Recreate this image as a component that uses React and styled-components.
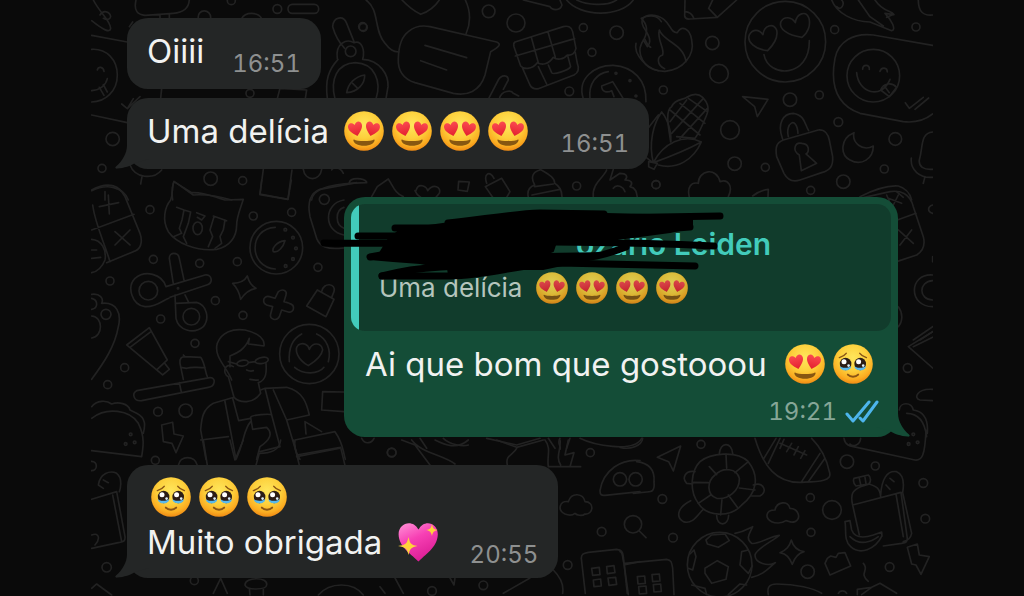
import React from "react";
import styled, { createGlobalStyle, ThemeProvider } from "styled-components";

const theme = {
    fonts: {
        sansSerif: '"Inter", "Liberation Sans", sans-serif',
    },
    colors: {
        page: "#0a0a0a",
        doodle: "#222222",
        incoming: "#242626",
        outgoing: "#144d37",
        quote: "#113c2c",
        accent: "#42cbbb",
        text: "#f1f2f1",
        read: "#4db5ec",
    },
};

const GlobalStyle = createGlobalStyle`
    * {
        box-sizing: border-box;
    }

    body {
        margin: 0;
        background: ${theme.colors.page};
        font-family: ${theme.fonts.sansSerif};
    }
`;

const Chat = styled.main`
    position: relative;
    display: flex;
    flex-direction: column;
    align-items: flex-start;
    max-width: 842px;
    min-height: 100vh;
    margin: 0 auto;
    padding: 18px 35px 18px 36px;
    overflow: hidden;
`;

const WallpaperArt = styled.svg`
    position: absolute;
    top: 0;
    left: 0;
    width: 100%;
    height: 100%;
    fill: none;
    stroke: ${(props) => props.theme.colors.doodle};
    stroke-width: 5;
    stroke-linecap: round;
    stroke-linejoin: round;
`;

const Bubble = styled.article`
    position: relative;
    display: flex;
    align-items: flex-end;
    gap: 28px;
    margin-top: ${(props) => (props.$first ? "0" : props.$grouped ? "9px" : "28px")};
    padding: ${(props) => (props.$lines > 1 ? "10px 20px 8px 20px" : "11px 20px 10px 20px")};
    border-radius: 21px;
    background: ${(props) => props.theme.colors.incoming};
`;

const OutgoingBubble = styled(Bubble)`
    flex-direction: column;
    align-items: stretch;
    align-self: flex-end;
    gap: 0;
    min-width: 554px;
    padding: 7px 7px 10px;
    background: ${(props) => props.theme.colors.outgoing};
`;

const TailShape = styled.svg`
    position: absolute;
    bottom: 0;
    width: 34px;
    height: 30px;
    ${(props) =>
        props.$side === "right"
            ? "right: -12px; transform: scaleX(-1);"
            : "left: -12px;"}
    fill: ${(props) =>
        props.$side === "right"
            ? props.theme.colors.outgoing
            : props.theme.colors.incoming};
`;

const Message = styled.p`
    margin: 0;
    padding-bottom: 5px;
    color: ${(props) => props.theme.colors.text};
    font-size: 33px;
    line-height: 45px;
    white-space: nowrap;
`;

const OutgoingMessage = styled(Message)`
    display: flex;
    justify-content: space-between;
    align-items: center;
    padding: 11px 14px 10px;
`;

const Time = styled.time`
    color: ${(props) => (props.$outgoing ? "#86a697" : "#8e9090")};
    font-size: 24px;
    font-variant-numeric: tabular-nums;
    line-height: 30px;
`;

const Meta = styled.div`
    display: flex;
    align-items: center;
    justify-content: flex-end;
    gap: 8px;
    padding-right: 12px;
`;

const Quote = styled.blockquote`
    position: relative;
    margin: 0;
    padding: 20px 20px 23px 28px;
    border-radius: 14px;
    background: linear-gradient(
        to right,
        ${(props) => props.theme.colors.accent} 8px,
        ${(props) => props.theme.colors.quote} 8px
    );
`;

const Author = styled.cite`
    display: flex;
    margin-bottom: 4px;
    color: ${(props) => props.theme.colors.accent};
    font-size: 30px;
    font-style: normal;
    font-weight: 600;
    line-height: 40px;
    white-space: nowrap;
`;

const HiddenName = styled.span`
    width: 197px;
`;

const QuotedText = styled.p`
    margin: 0;
    color: #b5c5bd;
    font-size: 26px;
    line-height: 40px;
    white-space: nowrap;
`;

const ScribbleArt = styled.svg`
    position: absolute;
    top: -14px;
    left: -41px;
    width: 420px;
    height: 100px;
    fill: #000;
    stroke: #000;
    stroke-linecap: round;
    stroke-linejoin: round;
`;

const EmojiRun = styled.span`
    margin-left: 2px;
`;

const EmojiArt = styled.svg`
    width: ${(props) => (props.$small ? "32px" : "40px")};
    height: ${(props) => (props.$small ? "32px" : "40px")};
    margin: 0 4px;
    vertical-align: ${(props) => (props.$small ? "-7px" : "-8px")};
    opacity: ${(props) => (props.$small ? 0.86 : 1)};
`;

const Ticks = styled.svg`
    width: 34px;
    height: 24px;
    fill: none;
    stroke: ${(props) => props.theme.colors.read};
    stroke-width: 3;
    stroke-linecap: round;
    stroke-linejoin: round;
`;

const Defs = styled.svg`
    position: absolute;
`;

function EmojiPaints() {
    return (
        <Defs width="0" height="0" aria-hidden="true">
            <defs>
                <radialGradient id="face" cx="50%" cy="34%" r="68%">
                    <stop offset="0" stopColor="#ffe65c" />
                    <stop offset="0.5" stopColor="#fdd03c" />
                    <stop offset="0.8" stopColor="#fbae22" />
                    <stop offset="1" stopColor="#ee8512" />
                </radialGradient>
                <linearGradient id="love" x1="0" y1="0" x2="0" y2="1">
                    <stop offset="0" stopColor="#fb4a50" />
                    <stop offset="1" stopColor="#e3202f" />
                </linearGradient>
                <linearGradient id="pink" x1="0.2" y1="0" x2="0.7" y2="1">
                    <stop offset="0" stopColor="#ff86d2" />
                    <stop offset="0.4" stopColor="#f740b4" />
                    <stop offset="1" stopColor="#d81991" />
                </linearGradient>
            </defs>
        </Defs>
    );
}

const eyeHeart =
    "M0 7.6C-3 5.2 -8 1.6 -8 -2.4C-8 -6.8 -2.4 -8 0 -3.6C2.4 -8 8 -6.8 8 -2.4C8 1.6 3 5.2 0 7.6Z";

function HeartEyes({ small }) {
    return (
        <EmojiArt viewBox="0 0 40 40" $small={small} role="img" aria-label="😍">
            <circle cx="20" cy="20" r="19.8" fill="url(#face)" />
            <path
                d="M10 28.4C13 30.4 27 30.4 30 28.4C31.4 28.2 30.4 31.2 27.8 33C24 35.4 16 35.4 12.2 33C9.6 31.2 8.6 28.2 10 28.4Z"
                fill="#875711"
            />
            <g fill="url(#love)">
                <path d={eyeHeart} transform="translate(11.6 17.6) rotate(-14) scale(.88 1)" />
                <path d={eyeHeart} transform="translate(28.4 17.6) rotate(14) scale(.88 1)" />
            </g>
        </EmojiArt>
    );
}

function HappyTears() {
    return (
        <EmojiArt viewBox="0 0 40 40" role="img" aria-label="🥹">
            <circle cx="20" cy="20" r="19.8" fill="url(#face)" />
            {[12.6, 27.2].map((x) => (
                <g key={x}>
                    <ellipse cx={x} cy="20" rx="5.8" ry="6.2" fill="#2b1d16" />
                    <path
                        d={`M${x - 5.8} 22C${x - 5} 24.4 ${x + 4} 24.4 ${x + 5.6} 22C${x + 5.6} 27.8 ${x - 5.4} 28 ${x - 5.8} 22Z`}
                        fill="#58b9ed"
                    />
                    <circle cx={x - 1.6} cy="17.8" r="2.5" fill="#fff" />
                    <circle cx={x + 3} cy="21.6" r="1.3" fill="#dff2ff" />
                </g>
            ))}
            <g fill="none" stroke="#8a5515" strokeWidth="1.5" strokeLinecap="round">
                <path d="M6.4 13.6C9 12.8 11.6 11.6 13.2 9.4" />
                <path d="M33.4 13.6C31 12.8 28.4 11.6 26.8 9.4" />
                <path d="M14.8 30.6C17.4 33.4 22.6 33.4 25.2 30.6" strokeWidth="1.9" />
            </g>
        </EmojiArt>
    );
}

function SparklingHeart() {
    return (
        <EmojiArt viewBox="0 0 40 40" role="img" aria-label="💖">
            <path
                d="M20.5 39.6C15 33 1 26 .6 12.4C.4 .6 15-3.4 20.5 7.6C26-3.4 40 .6 39.8 12.4C39.4 26 26 33 20.5 39.6Z"
                fill="url(#pink)"
            />
            <g fill="#ffd23b">
                <path d="M10.5 15C12 22 13.4 23 19.5 24C13.4 25.2 12 26.4 10.5 33C9 26.4 7.4 25.2 0 24C7.4 23 9 22 10.5 15Z" />
                <path d="M34 2C34.8 6.4 36 7.4 40 8C36 8.8 34.8 9.8 34 14C33 9.8 32 8.8 28 8C32 7.4 33 6.4 34 2Z" />
            </g>
        </EmojiArt>
    );
}

function Tail({ side }) {
    return (
        <TailShape viewBox="0 0 34 30" $side={side} aria-hidden="true">
            <path d="M12 0V6C12 15 7 22 1 27.6C-.4 29 .4 29.8 2.4 29.6C9 29 16 27 20 24L34 20V0Z" />
        </TailShape>
    );
}

function Scribble() {
    return (
        <ScribbleArt viewBox="310 190 420 100" aria-hidden="true">
            <path
                d="M380 253L388 240L400 230L450 223L540 214L606 214L692 216L692 227L670 232L610 240L545 241L555 245L553 251L545 254L610 253L590 259L543 269L510 269L462 276L449 275L448 268L420 263L393 261L370 259Z"
                strokeWidth="2"
            />
            <g fill="none" strokeWidth="7">
                <path d="M324 243C440 245 560 238 714 246" />
                <path d="M358 236H400M395 228H440" />
                <path d="M448 223C480 220 510 214 540 213L604 214" />
                <path d="M540 219L720 216" />
                <path d="M690 227C650 230 600 234 540 240" />
                <path d="M370 257C400 250 420 255 440 256" />
                <path d="M382 276C420 266 440 268 455 266" />
                <path d="M382 276H450C490 275 520 264 560 263L695 266" />
                <path d="M560 259C590 259 605 255 626 247" />
            </g>
        </ScribbleArt>
    );
}

// Each group of doodles is drawn at three times its size on the wallpaper.
function Patch({ x, y, children }) {
    return <g transform={`translate(${x} ${y}) scale(.3333)`}>{children}</g>;
}

function Dots({ at }) {
    return at.map(([x, y, r = 12]) => <circle key={`${x}-${y}`} cx={x} cy={y} r={r} />);
}

function Wallpaper() {
    return (
        <WallpaperArt viewBox="91 0 842 596" preserveAspectRatio="xMidYMin slice" aria-hidden="true">
            <Patch x={90} y={0}>
                <path d="M10 0C30 40 60 60 62 85C60 100 40 90 5 62M30 45C40 28 60 35 62 50C60 60 50 60 40 55" />
                <path d="M138 0C130 35 145 44 165 46L250 40C280 38 296 25 298 0M210 44V56M238 42V56" />
                <path d="M5 106L112 126M5 148C50 145 82 180 82 225C82 275 45 305 5 306M22 210C25 198 40 200 42 214M5 272C30 270 48 255 52 236M28 262L42 286M40 254L52 276" />
                <path d="M325 56C320 25 365 25 362 56M455 56C465 35 505 35 515 56M95 312L112 326L150 290M112 326L130 296M5 345L112 368" />
                <path d="M120 495C135 535 190 540 215 510M156 530L152 552M5 572C50 550 100 560 115 600M45 575V600M118 80L128 66" />
                <path d="M215 265L212 296M562 296L570 265L650 270L646 296M520 508L510 584L594 598L606 510M640 508C645 545 690 545 695 508M248 600C245 580 248 555 252 544L310 585C350 582 390 590 425 600" />
                <path d="M665 600C670 560 740 550 830 548M778 548C780 532 820 532 830 546M845 590L862 560L895 537C910 560 915 580 940 590" />
                <rect x="594" y="13" width="92" height="27" rx="13" />
                <Dots at={[[68, 417, 20], [36, 505], [562, 27, 13], [424, 2], [480, 280], [362, 536, 20], [458, 542], [820, 82]]} />
            </Patch>
            <Patch x={330} y={0}>
                <path d="M108 0C150 30 130 90 165 130C180 150 190 155 206 156M406 0C425 40 420 75 408 102M216 0C235 20 255 35 272 43C295 35 315 20 328 0" />
                <path d="M235 95C255 78 275 75 300 80L500 126C515 132 508 140 482 155L465 225C450 275 410 288 370 280L255 248C215 235 203 210 205 175C206 140 212 112 235 95ZM285 136L410 173M272 182L350 210" />
                <path d="M8 80C10 50 40 45 50 70L72 125M8 80C15 105 25 125 44 145M22 176C15 130 50 115 72 128C95 120 106 150 98 178C150 180 176 225 174 260L168 296M-8 296C-15 240 -5 210 24 178M50 278C55 250 75 230 104 225C105 250 85 275 50 278ZM68 250L84 266" />
                <circle cx="62" cy="154" r="16" />
                <path d="M15 296C0 240 20 190 76 188C135 190 155 245 138 296" />
                <path d="M555 126L700 80C715 76 725 82 728 95L738 145C735 160 725 168 712 165C700 180 680 180 670 172C655 195 635 195 622 188C605 210 580 208 572 198L552 140C550 133 550 130 555 126ZM604 112L625 188M654 96L676 172M556 168L734 116M578 205L600 255C606 266 614 268 625 266L732 225C745 218 748 205 742 190L736 158M625 200L650 252M655 195L665 218C670 226 718 210 722 200L714 170" />
                <path d="M476 296L505 240C515 222 535 225 535 240L520 268M508 296C515 270 545 270 550 280L566 288M580 0L660 20C665 30 690 35 696 15L690 0M710 0C750 50 870 55 910 0M740 0C770 15 830 20 860 0" />
                <path d="M934 55C955 75 955 100 935 130C920 160 940 205 985 212M934 55C965 40 985 50 994 65M945 118C950 130 955 138 962 142" />
                <path d="M760 296C740 235 795 195 850 196C910 200 950 240 948 305M780 296C775 250 800 220 835 215M815 258L848 245L880 296M815 258C815 275 830 280 845 272L852 290" />
                <path d="M5 510C10 500 30 500 40 520M258 572C265 545 290 560 293 572C310 550 335 560 328 580L318 592M255 572C260 585 265 588 272 592M386 544L418 546L412 574L384 570ZM466 560L515 535L540 575L530 592M466 560L488 592M470 550C460 520 480 510 492 535M595 592C590 570 600 560 614 555C600 530 610 515 630 510L634 490M634 510C660 525 675 535 674 550C690 560 695 570 696 590M614 560L670 552M606 585L690 568" />
                <path d="M790 592C785 550 820 535 830 510M850 508L840 540L870 520C890 520 895 530 885 540C905 540 910 550 900 560C920 565 920 580 922 592M850 565C860 550 880 560 885 575" />
                <Dots at={[[476, 34, 19], [558, 69, 27], [98, 80], [760, 83], [860, 98, 20], [786, 157], [718, 274, 13], [740, 558], [978, 554], [858, 220, 3], [900, 242, 3], [918, 288, 3]]} />
            </Patch>
            <Patch x={640} y={0}>
                <path d="M-12 130C-20 160 20 215 75 214C130 210 165 165 155 120C150 85 125 75 112 98C85 100 95 50 35 45C10 45 0 60 10 80C30 110 35 125 22 140L10 120M58 90C50 120 75 145 68 165C50 170 50 195 74 206M58 90C70 125 130 130 138 185" />
                <path d="M135 0L134 48C136 58 142 58 150 57L232 52L290 0M206 25L232 52M134 35C150 35 158 45 162 56M206 25L218 0" />
                <circle cx="436" cy="125" r="121" />
                <path d="M383 152C345 148 320 125 328 105C338 85 358 88 369 104C372 75 400 68 410 90C415 112 400 135 383 152ZM486 112C440 105 415 85 423 65C432 48 455 50 466 68C470 40 498 30 507 55C512 75 505 98 486 112ZM372 164C385 235 510 235 508 122" />
                <path d="M575 0C590 40 640 65 690 66L755 92C770 90 755 60 735 40L762 44C755 30 730 38 705 0M590 20C605 35 615 10 605 0M655 0L690 50M690 50L730 78M740 52L758 44M835 0C835 35 850 48 878 45" />
                <path d="M878 136L700 105C640 98 595 125 585 175C570 255 590 315 660 340L790 365C830 370 855 360 878 342" />
                <circle cx="700" cy="227" r="79" />
                <path d="M668 208C668 192 690 192 688 208M720 214C724 200 742 202 742 216M650 218C655 280 725 300 750 238M722 270C730 250 755 245 770 262L748 290L722 270M735 260L748 278M796 308L808 325L850 292M825 328L866 294" />
                <path d="M308 290L384 298L352 350L344 320ZM428 418C410 370 430 340 460 340C495 345 495 375 506 392M445 410C435 370 470 345 474 400" />
                <path d="M430 420L535 390C555 388 565 405 568 420L578 470C580 500 570 510 545 518L480 540C455 548 440 535 432 520L410 470C405 440 410 428 430 420Z" />
                <path d="M478 465C455 450 465 425 486 430C510 432 508 455 498 462L530 490L484 512Z" />
                <path d="M642 398C600 415 600 465 630 480C665 500 700 475 700 438C670 455 635 430 642 398ZM878 396C840 400 850 440 838 480C836 500 850 510 878 508M814 474C810 510 840 535 878 532M855 530L850 550" />
                <path d="M40 488C25 430 40 370 65 336C85 360 95 400 92 425M40 488C70 430 130 400 184 426C160 480 110 510 55 495M40 488C90 470 140 450 184 426M15 470L35 485M26 485L52 490L42 508L26 500ZM20 390L55 345" />
                <path d="M92 425C85 380 75 330 95 320C105 295 130 300 140 292C160 280 175 280 188 292C200 305 210 320 200 345C190 370 180 395 165 415L110 410M90 330L180 405M120 310L195 370M145 295L202 335M90 365L140 300M95 400L190 295M120 415L202 325" />
                <path d="M148 592C140 560 155 545 175 550C175 510 230 500 240 545C265 535 280 560 265 590M338 588C355 575 370 570 385 568L384 590M660 590C700 570 740 555 775 558C800 565 810 580 815 600M770 575L790 592" />
                <Dots at={[[217, 129, 20], [237, 221, 28], [70, 270], [270, 390, 28], [284, 491, 20], [376, 502], [48, 554], [450, 299, 20], [538, 285], [584, 89], [828, 81], [595, 366, 13], [766, 417, 19], [733, 507], [610, 545, 20], [512, 571]]} />
            </Patch>
            <Patch x={90} y={180}>
                <path d="M5 30C60 0 90 20 105 50L150 160C160 190 150 210 130 215L50 248M8 75C15 130 40 180 60 245M5 150L132 103M55 45L58 102M28 80L86 68M75 155L120 195M120 150L75 195M5 178C35 180 50 210 45 240C35 265 20 275 5 278M5 210H20M5 235L32 232" />
                <path d="M252 5L305 38C340 35 370 50 405 60L460 58C450 90 440 110 440 135C440 170 420 200 380 208C320 215 260 190 235 155C215 120 225 80 242 60C250 40 245 20 252 5Z" />
                <path d="M260 82L282 90L276 120L268 145L275 160L250 170M282 90L302 96L295 130L280 170L290 190M320 98L345 108L335 120L322 112M370 108L410 122M372 110L360 150L368 170L355 200M405 120L400 150L390 170L395 190L375 205" />
                <ellipse cx="323" cy="145" rx="14" ry="19" />
                <circle cx="559" cy="203" r="79" />
                <path d="M556 142C475 145 475 262 556 267M585 182C560 185 545 205 550 215C565 220 580 200 585 182Z" />
                <Dots at={[[586, 149, 4], [609, 173, 4], [618, 205, 4], [609, 237, 4], [587, 258, 4]]} />
                <path d="M515 0L510 42L594 58L604 0M800 8L690 28C660 40 652 70 660 110L680 175C690 200 710 210 760 204M762 60C700 70 700 155 762 165M762 82C735 90 735 135 762 145" />
                <path d="M238 235C238 215 265 215 268 235L282 300M238 235L250 312M228 320L345 285C365 282 372 308 350 315L240 352M228 320C215 280 165 270 135 295C110 320 125 375 165 380C200 382 220 360 236 355M255 345L258 415C265 450 310 465 340 440C360 415 350 375 320 367L258 370M285 345L295 365" />
                <circle cx="175" cy="332" r="28" />
                <circle cx="304" cy="410" r="25" />
                <circle cx="264" cy="325" r="2" />
                <path d="M472 288C478 310 485 318 498 325C480 328 465 338 452 358C448 335 440 322 428 310C450 310 465 302 472 288Z" />
                <path d="M565 335C580 325 592 332 588 345L582 365L598 370C618 375 612 400 595 396L575 390L568 410C560 425 538 418 542 402L548 380L530 375C515 368 520 345 538 350L555 355Z" />
                <path d="M682 330L650 378L708 410L732 358ZM695 335C700 305 740 310 732 335L725 352" />
                <path d="M5 343C30 340 42 355 35 370C80 365 95 400 85 440C75 500 40 550 5 598M5 355C25 360 25 385 5 388M5 408C40 410 40 470 5 474" />
                <path d="M110 495L178 443L232 540L200 570L110 495M120 502L184 454M200 570L218 585L238 568L224 550" />
                <path d="M140 632L360 593C380 592 375 620 355 622L155 662C130 665 125 640 140 632ZM268 608L274 636M280 598L270 550C268 535 275 530 285 530L332 532C345 550 345 575 352 590M272 562L290 565C310 558 325 565 345 562M285 530L280 525" />
                <path d="M425 600C410 560 370 530 382 490C395 455 430 445 465 450C510 460 525 480 522 498L475 492L478 475C465 510 440 520 420 528V560M528 550C530 575 530 600 505 608L512 640C490 672 450 670 432 652L415 590C395 580 405 545 430 560" />
                <path d="M440 552L415 545M440 552C445 540 475 535 475 548C472 560 445 562 440 552ZM495 545C500 532 535 525 535 540C530 552 500 555 495 545ZM475 548L495 545M470 570C478 574 484 574 490 572M505 600C495 602 488 600 480 598" />
                <path d="M432 652L370 670C335 690 335 720 332 750L348 838M404 660L438 838M428 655L446 722L482 715M512 630L525 625L545 705M525 625L590 622C640 635 650 670 658 705L590 720L550 630M590 720L625 838M332 780L415 770M482 712C485 705 540 700 545 705L570 800L510 815M482 712L488 748L530 742C550 760 540 780 510 800L500 838M482 725C460 750 465 780 438 838" />
                <circle cx="658" cy="522" r="89" />
                <path d="M655 557C625 540 610 510 625 495C640 485 655 495 658 508C668 485 695 488 698 510C695 530 675 545 655 557ZM598 545C595 500 610 475 635 462M680 462C710 475 725 510 715 545M614 562C640 585 685 583 702 562" />
                <path d="M762 636L698 635L695 690L762 695M645 725L648 762M645 725L695 755M615 780L735 755C760 790 758 810 766 838M615 780C610 810 625 830 630 838M620 830L750 805" />
                <path d="M5 680C20 660 50 660 65 672C85 665 115 670 120 690L140 700C170 715 165 740 160 760M5 715C50 680 120 690 145 730C165 770 160 800 155 830L5 812" />
                <Dots at={[[122, 763, 4], [107, 792, 4], [134, 787, 4]]} />
                <path d="M215 735L248 727L252 762L280 768L258 818L246 790L220 785Z" />
                <Dots at={[[180, 89], [190, 238], [60, 303], [48, 403, 15], [329, 250], [442, 245], [490, 108], [605, 97], [703, 58, 15], [684, 262], [376, 362], [459, 406], [212, 417], [315, 490], [104, 563], [53, 614], [204, 695, 13], [287, 692, 20]]} />
            </Patch>
            <Patch x={90} y={440}>
                <path d="M340 0L352 76M420 0L435 60L460 0M498 76L508 40C540 40 570 30 572 0M620 45L752 22L765 76M610 0L628 76M265 76C270 45 315 45 322 76M5 178L80 155L105 290C106 305 100 305 85 308L5 325M68 165L95 305M25 135C30 100 60 90 80 100C100 115 90 150 88 155M25 135L40 145M40 120L55 128M5 285C30 275 30 300 15 315M5 445L20 432L65 465M370 460L392 415L412 460M465 435C465 410 535 410 530 435C528 450 470 452 465 435ZM478 445L480 465M520 445V465M685 465C720 425 790 425 820 465" />
                <Dots at={[[196, 61], [5, 78, 14], [50, 382, 14], [313, 422]]} />
            </Patch>
            <Patch x={370} y={440}>
                <path d="M95 0L135 15L180 75M125 0C155 40 220 45 255 72M195 0C225 15 260 30 295 0M380 0L440 22L520 0M440 25C430 45 405 45 412 75M525 0C545 25 530 50 535 80M535 80H632M570 0C575 25 555 50 572 75M595 0L585 45L612 38L600 80" />
                <path d="M690 152C700 90 755 55 810 62M690 152C690 165 695 167 705 166L810 155M585 222C560 210 570 180 595 185C605 155 640 160 645 185C675 185 670 225 645 222C635 230 620 225 615 220C605 228 595 226 585 222Z" />
                <path d="M646 460L634 355C634 342 640 340 655 337L740 328C755 330 758 335 760 350L772 460M765 374L810 365M665 385L688 382L690 404L668 406ZM710 380L732 377L735 398L712 401ZM670 420L692 417L694 438L672 440ZM714 414L737 412L740 433L717 436ZM550 390C570 410 582 435 578 460M400 460L480 414M30 440L45 460M75 414L100 460M240 414L252 435L255 414" />
                <circle cx="750" cy="118" r="20" />
                <circle cx="797" cy="118" r="20" />
                <Dots at={[[65, 38, 13], [661, 38], [695, 275, 13], [593, 375, 13], [340, 436, 13], [186, 453, 13]]} />
            </Patch>
            <Patch x={620} y={430}>
                <path d="M0 52C30 60 65 48 68 25M50 95C90 100 105 120 102 155C105 185 95 185 80 186L40 190M112 82L182 48L160 123L146 95Z" />
                <circle cx="39" cy="283" r="26" />
                <path d="M58 303L78 323M240 95C270 70 350 60 385 95C420 140 410 190 365 225C330 265 260 260 235 220C205 180 215 120 240 95Z" />
                <path d="M285 135C310 110 350 115 358 145C360 180 325 210 290 205C260 195 260 155 285 135ZM318 72L320 115M268 110L290 134M218 157L265 158M235 220L272 195M302 255L306 207M352 232L325 195M405 180L358 174M385 95L345 128M298 72C300 35 335 35 338 70M225 125C195 120 185 145 200 160L218 162M400 165C430 155 445 185 420 198L395 198M212 212C175 230 165 260 190 275C220 285 235 250 250 238M290 256C290 290 325 290 326 256" />
                <path d="M405 25C430 110 470 160 545 157C590 155 640 155 628 125C620 85 600 50 575 25M430 88L468 25M445 100L480 25M545 155L600 70M565 155L615 85M480 40L560 75M492 28L480 55M515 40L500 65M535 50L522 75M555 62L542 85" />
                <path d="M672 25C675 45 690 48 700 50L885 90C905 92 915 80 918 0M690 42C700 52 720 45 722 25" />
                <Dots at={[[866, 42, 4], [893, 37, 4], [880, 13, 4]]} />
                <path d="M698 225L843 187L862 325C862 338 855 338 845 340L790 348M698 225C690 190 700 180 722 170L748 162C770 170 780 175 782 200M698 225L718 315M702 145L745 135C755 142 752 160 745 162L708 168C700 160 700 150 702 145ZM718 145L722 163M735 142L738 160M782 195C785 150 800 120 830 125C855 135 852 165 848 188M810 145L822 155M798 165L810 178M848 187L875 310C872 325 865 330 850 335M828 192L850 320" />
                <path d="M675 275L690 272L695 300C705 325 730 325 760 315L785 306L786 318C765 360 720 375 692 350C670 330 680 300 675 275ZM690 320C720 350 755 335 775 320" />
                <path d="M455 275C435 265 435 240 465 240C470 215 505 210 510 235C535 235 545 265 525 275C510 280 505 272 498 272C485 282 465 280 455 275ZM514 330C520 352 532 362 552 365C535 370 525 380 517 403C508 382 500 372 480 368C500 360 508 350 514 330Z" />
                <circle cx="299" cy="404" r="97" />
                <path d="M255 415L292 392L325 410L318 448L275 460L255 430ZM258 330L275 315L315 312L328 332L295 352L262 342ZM385 360L365 365L360 405L385 430L397 408M210 372L222 360L228 380L218 420L205 415M215 465L255 475L260 494M325 494L360 462L380 465M345 310C375 305 385 295 398 290C390 310 375 325 395 340C415 345 450 318 478 316C455 335 410 355 405 375C405 400 445 410 466 398C445 415 430 435 395 442" />
                <path d="M622 385L632 378L648 382L655 370L675 368L692 408L630 435L615 400ZM862 352L892 342L898 375L928 380L903 433L888 405L875 402ZM730 400C750 420 715 430 745 454M445 494C440 470 450 462 470 462C530 462 580 475 605 490M712 494V478L755 472L725 494M755 472L780 460L830 490M655 490C660 480 675 480 680 490" />
                <path d="M0 365C10 365 8 395 12 400L25 494M15 400L140 388C155 390 155 398 158 415L162 494M52 440L74 438L76 460L54 462ZM96 434L118 432L120 453L98 455ZM56 470L78 468L80 490L58 492ZM100 464L122 462L124 484L102 486Z" />
                <Dots at={[[243, 43], [127, 207, 13], [159, 323, 13], [571, 203], [573, 307], [681, 95, 20], [766, 108], [910, 159, 13], [916, 266, 13], [636, 240, 28], [563, 425, 20], [809, 411, 13]]} />
            </Patch>
            <Patch x={600} y={190}>
                <path d="M890 215L950 195C975 180 975 160 970 140L940 50C930 10 900 0 870 5L780 25M892 90L948 70M860 15L892 90M865 25L905 40M895 15L880 45M895 120L940 160M935 120L900 165M998 255C925 250 925 350 998 350M998 272C955 275 955 328 998 330M895 350C910 370 908 395 895 410M940 450L998 410M960 450L998 425M998 45C982 50 982 65 998 70M998 200V215" />
            </Patch>
            <Patch x={640} y={330}>
                <path d="M878 5L805 50L878 114M820 50L878 22M878 178C830 175 820 205 840 210L878 212M778 240C780 215 815 215 820 240C855 245 865 275 862 310M800 250C840 250 855 280 860 320" />
                <circle cx="803" cy="114" r="13" />
            </Patch>
            <Patch x={340} y={330}>
                <path d="M65 325C75 345 95 340 102 325M240 325L260 355M310 325C330 345 370 350 385 345M440 325L530 345L600 325M625 325L645 355M660 325C650 340 665 350 660 358M690 325L680 355M720 325C760 345 880 370 905 325" />
                <circle cx="155" cy="367" r="13" />
            </Patch>
        </WallpaperArt>
    );
}

function App() {
    return (
        <ThemeProvider theme={theme}>
            <GlobalStyle />
            <EmojiPaints />
            <Chat>
                <Wallpaper />
                <Bubble $first>
                    <Message>Oiiii</Message>
                    <Time>16:51</Time>
                </Bubble>
                <Bubble $grouped>
                    <Tail side="left" />
                    <Message>
                        Uma delícia{" "}
                        <EmojiRun>
                            <HeartEyes />
                            <HeartEyes />
                            <HeartEyes />
                            <HeartEyes />
                        </EmojiRun>
                    </Message>
                    <Time>16:51</Time>
                </Bubble>
                <OutgoingBubble>
                    <Tail side="right" />
                    <Quote>
                        <Author>
                            <HiddenName />
                            ozario Leiden
                        </Author>
                        <QuotedText>
                            Uma delícia{" "}
                            <EmojiRun>
                                <HeartEyes small />
                                <HeartEyes small />
                                <HeartEyes small />
                                <HeartEyes small />
                            </EmojiRun>
                        </QuotedText>
                        <Scribble />
                    </Quote>
                    <OutgoingMessage>
                        Ai que bom que gostooou{" "}
                        <EmojiRun>
                            <HeartEyes />
                            <HappyTears />
                        </EmojiRun>
                    </OutgoingMessage>
                    <Meta>
                        <Time $outgoing>19:21</Time>
                        <Ticks viewBox="0 0 34 24" role="img" aria-label="Lida">
                            <path d="M2 14L8 21L24 2M15 18L18 21L32 2" />
                        </Ticks>
                    </Meta>
                </OutgoingBubble>
                <Bubble $lines={2}>
                    <Tail side="left" />
                    <Message>
                        <HappyTears />
                        <HappyTears />
                        <HappyTears />
                        <br />
                        Muito obrigada{" "}
                        <EmojiRun>
                            <SparklingHeart />
                        </EmojiRun>
                    </Message>
                    <Time>20:55</Time>
                </Bubble>
            </Chat>
        </ThemeProvider>
    );
}

export default App;
